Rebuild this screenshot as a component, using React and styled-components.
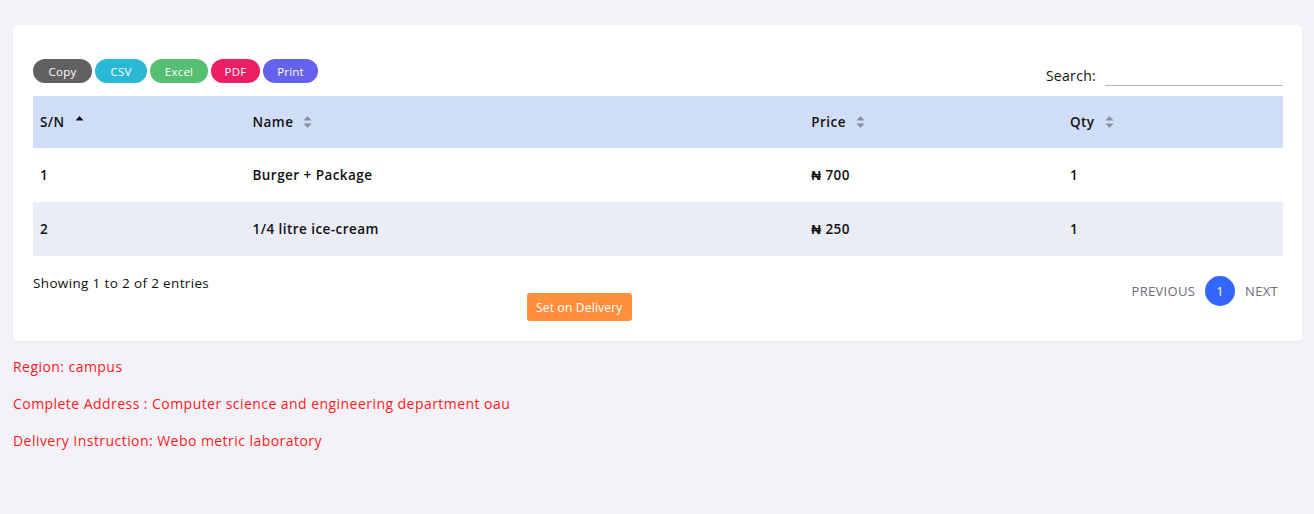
import React from "react";
import styled, { createGlobalStyle } from "styled-components";

const Global = createGlobalStyle`
  html, body { margin: 0; padding: 0; background: #f3f2f8; }
  body { font-family: "Open Sans", "Liberation Sans", sans-serif; color: #111; }
  * { box-sizing: border-box; }
`;

const Page = styled.div`
  padding: 25px 12px 40px 13px;
`;

const Card = styled.div`
  background: #fff;
  border-radius: 4px;
  box-shadow: 0 1px 2px rgba(0,0,0,0.06);
  padding: 34px 19px 20px 20px;
`;

const TopBar = styled.div`
  display: flex;
  justify-content: space-between;
  align-items: flex-end;
  height: 37px;
  padding-bottom: 10px;
`;

const Buttons = styled.div`
  display: flex;
  gap: 3px;
  align-self: flex-start;
`;

const ExportButton = styled.button`
  height: 24px;
  width: ${p => p.$w}px;
  border: none;
  border-radius: 12px;
  background: ${p => p.$bg};
  color: #fff;
  font-family: inherit;
  font-size: 11.5px;
  font-weight: 500;
  letter-spacing: 0.2px;
  padding: 0;
  cursor: pointer;
`;

const Search = styled.label`
  display: flex;
  align-items: center;
  gap: 9px;
  font-size: 14px;
  letter-spacing: 0.3px;
  color: #111;
`;

const SearchInput = styled.input`
  width: 178px;
  height: 22px;
  border: none;
  border-bottom: 1px solid #b5b5b5;
  outline: none;
  background: transparent;
`;

const Table = styled.table`
  width: 100%;
  border-collapse: collapse;
  font-size: 13.5px;
  font-weight: 600;
  letter-spacing: 0.45px;
`;

const Th = styled.th`
  text-align: left;
  background: #d1defa;
  height: 52px;
  padding: 0 7px;
  font-weight: 600;
  width: ${p => p.$w};
  white-space: nowrap;
`;

const Td = styled.td`
  height: 54px;
  padding: 0 7px;
  background: ${p => (p.$alt ? "#eaecf6" : "#fff")};
`;

const HeadInner = styled.span`
  display: inline-flex;
  align-items: center;
  gap: 10px;
`;

const SortIcon = ({ active }) => (
  <svg width="9" height="14" viewBox="0 0 9 14">
    <path d="M4.5 1 L8.5 5.5 L0.5 5.5 Z" fill={active ? "#111" : "#8a8f9c"} />
    {!active && <path d="M4.5 13 L8.5 8.5 L0.5 8.5 Z" fill="#8a8f9c" />}
  </svg>
);

const Footer = styled.div`
  display: grid;
  grid-template-columns: 494px auto 1fr;
  margin-top: 16px;
`;

const Info = styled.div`
  font-size: 13.5px;
  letter-spacing: 0.35px;
  color: #111;
  padding-top: 2px;
  white-space: nowrap;
`;

const DeliveryButton = styled.button`
  margin-top: 21px;
  height: 28px;
  padding: 0 9px;
  background: #fd8f3d;
  color: #fff;
  border: none;
  border-radius: 3px;
  font-family: inherit;
  font-size: 12px;
  letter-spacing: 0.2px;
  cursor: pointer;
`;

const Pager = styled.div`
  display: flex;
  justify-content: flex-end;
  align-items: flex-start;
  gap: 10px;
  padding-top: 4px;
  padding-right: 5px;
  font-size: 13px;
  letter-spacing: 0.3px;
  color: #6c6c7a;
`;

const PageLink = styled.span`
  line-height: 30px;
`;

const PageNum = styled.span`
  width: 30px;
  height: 30px;
  border-radius: 50%;
  background: #3366ff;
  color: #fff;
  display: flex;
  align-items: center;
  justify-content: center;
  font-size: 13px;
`;

const Details = styled.div`
  padding-top: 16px;
  display: flex;
  flex-direction: column;
  gap: 18px;
`;

const Detail = styled.div`
  color: #ff1a1a;
  font-size: 14px;
  letter-spacing: 0.45px;
  line-height: 19px;
`;

const rows = [
  { sn: "1", name: "Burger + Package", price: "₦ 700", qty: "1" },
  { sn: "2", name: "1/4 litre ice-cream", price: "₦ 250", qty: "1" },
];

export default function App() {
  return (
    <Page>
      <Global />
      <Card>
        <TopBar>
          <Buttons>
            <ExportButton $bg="#616161" $w={59}>Copy</ExportButton>
            <ExportButton $bg="#29b9d5" $w={52}>CSV</ExportButton>
            <ExportButton $bg="#55c071" $w={58}>Excel</ExportButton>
            <ExportButton $bg="#ec1f63" $w={49}>PDF</ExportButton>
            <ExportButton $bg="#6461ec" $w={55}>Print</ExportButton>
          </Buttons>
          <Search>
            Search:
            <SearchInput type="text" />
          </Search>
        </TopBar>
        <Table>
          <thead>
            <tr>
              <Th $w="17%"><HeadInner>S/N <SortIcon active /></HeadInner></Th>
              <Th $w="44.7%"><HeadInner>Name <SortIcon /></HeadInner></Th>
              <Th $w="20.7%"><HeadInner>Price <SortIcon /></HeadInner></Th>
              <Th><HeadInner>Qty <SortIcon /></HeadInner></Th>
            </tr>
          </thead>
          <tbody>
            {rows.map((r, i) => (
              <tr key={r.sn}>
                <Td $alt={i % 2 === 1}>{r.sn}</Td>
                <Td $alt={i % 2 === 1}>{r.name}</Td>
                <Td $alt={i % 2 === 1}>{r.price}</Td>
                <Td $alt={i % 2 === 1}>{r.qty}</Td>
              </tr>
            ))}
          </tbody>
        </Table>
        <Footer>
          <Info>Showing 1 to 2 of 2 entries</Info>
          <div><DeliveryButton>Set on Delivery</DeliveryButton></div>
          <Pager>
            <PageLink>PREVIOUS</PageLink>
            <PageNum>1</PageNum>
            <PageLink>NEXT</PageLink>
          </Pager>
        </Footer>
      </Card>
      <Details>
        <Detail>Region: campus</Detail>
        <Detail>Complete Address : Computer science and engineering department oau</Detail>
        <Detail>Delivery Instruction: Webo metric laboratory</Detail>
      </Details>
    </Page>
  );
}
